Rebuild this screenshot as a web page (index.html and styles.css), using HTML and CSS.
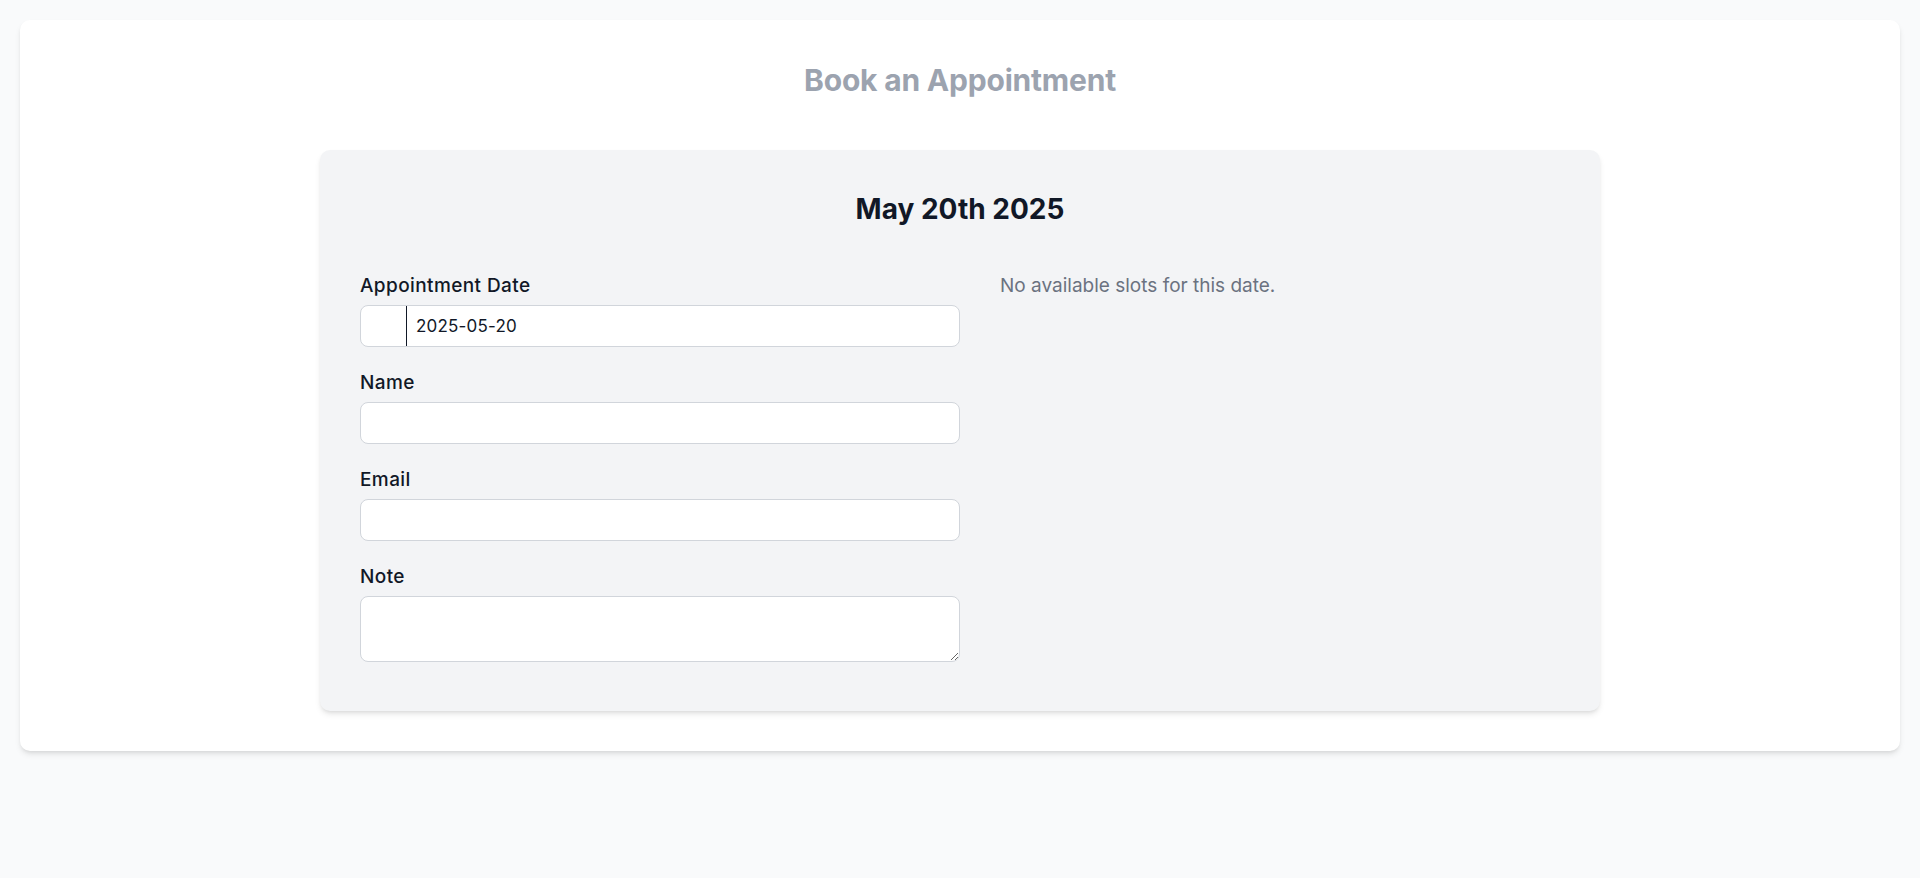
FILE: index.html
```html
<!DOCTYPE html>
<html lang="en">
<head>
<meta charset="utf-8">
<title>Book an Appointment</title>
<link rel="stylesheet" href="styles.css">
</head>
<body>
<main class="page-card">
  <h1 class="page-title">Book an Appointment</h1>
  <section class="booking-card">
    <h2 class="booking-date">May 20th 2025</h2>
    <div class="booking-grid">
      <form class="booking-form">
        <div class="field">
          <label class="field-label" for="date">Appointment Date</label>
          <div class="date-box">
            <span class="date-prefix"></span>
            <input class="date-input" id="date" type="text" value="2025-05-20">
          </div>
        </div>
        <div class="field">
          <label class="field-label" for="name">Name</label>
          <input class="text-input" id="name" type="text">
        </div>
        <div class="field">
          <label class="field-label" for="email">Email</label>
          <input class="text-input" id="email" type="email">
        </div>
        <div class="field field-last">
          <label class="field-label" for="note">Note</label>
          <textarea class="text-area" id="note" rows="2"></textarea>
        </div>
      </form>
      <div class="slots">
        <p class="slots-empty">No available slots for this date.</p>
      </div>
    </div>
  </section>
</main>
</body>
</html>
```
FILE: styles.css
```css
* { box-sizing: border-box; }

html, body {
  margin: 0;
  padding: 0;
}

body {
  background: #f9fafb;
  padding: 20px;
  font-family: Inter, "Noto Sans", "Liberation Sans", sans-serif;
  color: #111827;
}

.page-card {
  background: #ffffff;
  border-radius: 10px;
  box-shadow: 0 4px 6px -1px rgba(0,0,0,0.1), 0 2px 4px -2px rgba(0,0,0,0.1);
  padding: 42px 40px 40px;
}

.page-title {
  margin: 0 0 52px;
  text-align: center;
  font-size: 30px;
  line-height: 36px;
  font-weight: 700;
  color: #9ca3af;
  letter-spacing: -0.2px;
}

.booking-card {
  width: 1280px;
  margin: 0 auto;
  background: #f3f4f6;
  border-radius: 10px;
  box-shadow: 0 4px 6px -1px rgba(0,0,0,0.1), 0 2px 4px -2px rgba(0,0,0,0.1);
  padding: 41px 40px 49px;
}

.booking-date {
  margin: 0 0 45px;
  text-align: center;
  font-size: 28px;
  line-height: 36px;
  font-weight: 700;
  color: #111827;
}

.booking-grid {
  display: grid;
  grid-template-columns: 600px 1fr;
  column-gap: 40px;
}

.booking-form {
  margin: 0;
}

.field {
  margin-bottom: 22px;
}

.field-last {
  margin-bottom: 0;
}

.field-label {
  display: block;
  font-size: 19px;
  line-height: 28px;
  font-weight: 500;
  letter-spacing: 0.4px;
  color: #111827;
  margin-bottom: 5px;
}

.text-input,
.text-area,
.date-box {
  display: block;
  width: 100%;
  background: #ffffff;
  border: 1px solid #d1d5db;
  border-radius: 8px;
  font-family: inherit;
  font-size: 16px;
  line-height: 24px;
  color: #111827;
  outline: none;
}

.text-input {
  height: 42px;
  padding: 8px 12px;
}

.text-area {
  height: 66px;
  padding: 8px 12px;
  resize: vertical;
}

.date-box {
  display: flex;
  height: 42px;
  overflow: hidden;
}

.date-prefix {
  flex: 0 0 46px;
  border-right: 1px solid #111827;
}

.date-input {
  flex: 1;
  min-width: 0;
  border: 0;
  background: transparent;
  padding: 0 0 0 9px;
  font-family: inherit;
  font-size: 17px;
  letter-spacing: 0.2px;
  color: #111827;
  outline: none;
}

.slots-empty {
  margin: 0;
  font-size: 19px;
  line-height: 28px;
  color: #6b7280;
}
```
